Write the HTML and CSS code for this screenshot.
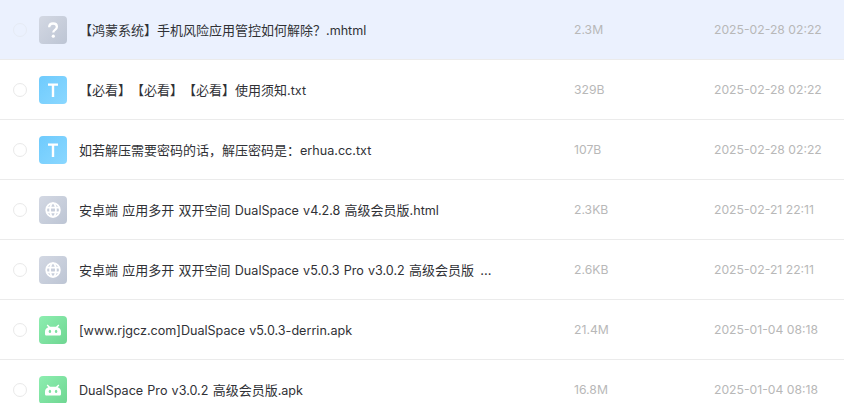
FILE: index.html
```html
<!DOCTYPE html>
<html lang="zh-CN">
<head>
<meta charset="utf-8">
<title>文件列表</title>
<link rel="stylesheet" href="styles.css">
</head>
<body>
<svg class="defs" width="0" height="0" aria-hidden="true">
  <defs>
    <linearGradient id="grey" x1="0" y1="0" x2="1" y2="1"><stop offset="0" stop-color="#d3d8e3"/><stop offset="1" stop-color="#bdc5d4"/></linearGradient>
    <linearGradient id="blue" x1="0" y1="0" x2="1" y2="1"><stop offset="0" stop-color="#6fcbfd"/><stop offset="1" stop-color="#8ad7ff"/></linearGradient>
    <linearGradient id="green" x1="0" y1="0" x2="1" y2="1"><stop offset="0" stop-color="#8deeb0"/><stop offset="1" stop-color="#6fd692"/></linearGradient>
    <symbol id="i-unknown" viewBox="0 0 28 28">
      <rect width="28" height="28" rx="4" fill="url(#grey)"/>
      <path d="M10.200 11.200c0-2.400 1.700-3.700 3.900-3.700s3.800 1.300 3.800 3.300c0 1.600-.9 2.400-1.900 3.100-1 .7-1.700 1.200-1.700 2.500" fill="none" stroke="#fff" stroke-width="2.300"/>
      <circle cx="14.300" cy="20.200" r="1.600" fill="#fff"/>
    </symbol>
    <symbol id="i-text" viewBox="0 0 28 28">
      <rect width="28" height="28" rx="4" fill="url(#blue)"/>
      <path d="M9 7.500h10v2.300h-3.800V21h-2.400V9.800H9z" fill="#fff"/>
    </symbol>
    <symbol id="i-web" viewBox="0 0 28 28">
      <rect width="28" height="28" rx="4" fill="url(#grey)"/>
      <g fill="none" stroke="#fff" stroke-width="1.800">
        <circle cx="14" cy="14" r="6.800"/>
        <ellipse cx="14" cy="14" rx="2.900" ry="6.800"/>
        <path d="M7.500 11.600h13M7.500 16.400h13"/>
      </g>
    </symbol>
    <symbol id="i-apk" viewBox="0 0 28 28">
      <rect width="28" height="28" rx="4" fill="url(#green)"/>
      <path d="M8.600 8.600l2.400 2.200h6l2.400-2.200 .9 1-1.600 1.600c2.200.8 3.300 2.500 3.300 4.500v2.200c0 .9-.7 1.600-1.600 1.600H7.600c-.9 0-1.600-.7-1.600-1.600v-2.200c0-2 1.100-3.700 3.300-4.500L7.700 9.600z" fill="#fff"/>
      <ellipse cx="10.900" cy="15.400" rx="1.200" ry="1.700" fill="#7fe2a2"/>
      <ellipse cx="17.100" cy="15.400" rx="1.200" ry="1.700" fill="#7fe2a2"/>
    </symbol>
  </defs>
</svg>
<ul class="list">
  <li class="row is-active">
    <span class="check"></span>
    <svg class="icon"><use href="#i-unknown"/></svg>
    <span class="name">【鸿蒙系统】手机风险应用管控如何解除？<span class="lat">.mhtml</span></span>
    <span class="size">2.3M</span>
    <span class="date">2025-02-28 02:22</span>
  </li>
  <li class="row">
    <span class="check"></span>
    <svg class="icon"><use href="#i-text"/></svg>
    <span class="name">【必看】【必看】【必看】使用须知<span class="lat">.txt</span></span>
    <span class="size">329B</span>
    <span class="date">2025-02-28 02:22</span>
  </li>
  <li class="row">
    <span class="check"></span>
    <svg class="icon"><use href="#i-text"/></svg>
    <span class="name">如若解压需要密码的话，解压密码是：<span class="lat">erhua.cc.txt</span></span>
    <span class="size">107B</span>
    <span class="date">2025-02-28 02:22</span>
  </li>
  <li class="row">
    <span class="check"></span>
    <svg class="icon"><use href="#i-web"/></svg>
    <span class="name">安卓端 应用多开 双开空间 <span class="lat">DualSpace v4.2.8</span> 高级会员版<span class="lat">.html</span></span>
    <span class="size">2.3KB</span>
    <span class="date">2025-02-21 22:11</span>
  </li>
  <li class="row">
    <span class="check"></span>
    <svg class="icon"><use href="#i-web"/></svg>
    <span class="name">安卓端 应用多开 双开空间 <span class="lat">DualSpace v5.0.3 Pro v3.0.2</span> 高级会员版 <span class="ell">...</span></span>
    <span class="size">2.6KB</span>
    <span class="date">2025-02-21 22:11</span>
  </li>
  <li class="row">
    <span class="check"></span>
    <svg class="icon"><use href="#i-apk"/></svg>
    <span class="name"><span class="lat">[www.rjgcz.com]DualSpace v5.0.3-derrin.apk</span></span>
    <span class="size">21.4M</span>
    <span class="date">2025-01-04 08:18</span>
  </li>
  <li class="row">
    <span class="check"></span>
    <svg class="icon"><use href="#i-apk"/></svg>
    <span class="name"><span class="lat">DualSpace Pro v3.0.2</span> 高级会员版<span class="lat">.apk</span></span>
    <span class="size">16.8M</span>
    <span class="date">2025-01-04 08:18</span>
  </li>
</ul>
</body>
</html>
```
FILE: styles.css
```css
html, body {
  margin: 0;
  padding: 0;
  height: 403px;
  overflow: hidden;
  background: #fff;
}
body {
  font-family: Inter, "Noto Sans CJK SC", sans-serif;
  font-size: 13px;
  color: #303136;
  text-spacing-trim: space-all;
}
.defs {
  position: absolute;
}
.list {
  list-style: none;
  margin: 0;
  padding: 0;
}
.row {
  display: flex;
  align-items: center;
  height: 60px;
  box-sizing: border-box;
  border-bottom: 1px solid #ebebeb;
  padding-left: 13px;
}
.row.is-active {
  background: #ebf1fe;
}
.check {
  flex: none;
  width: 14px;
  height: 14px;
  border: 1px solid #e9e9e9;
  border-radius: 50%;
  box-sizing: border-box;
  margin-right: 12px;
}
.is-active .check {
  border-color: #e6ebf4;
}
.icon {
  flex: none;
  width: 28px;
  height: 28px;
  margin-right: 12px;
}
.name {
  flex: none;
  width: 495px;
  white-space: nowrap;
  word-spacing: 0.6px;
}
.lat {
  font-size: 12.6px;
}
.ell {
  margin-left: 2px;
}
.size {
  flex: none;
  width: 140px;
  font-size: 12.2px;
  color: #b8b8b8;
}
.date {
  flex: none;
  font-size: 12.2px;
  color: #b8b8b8;
  white-space: nowrap;
}
```
